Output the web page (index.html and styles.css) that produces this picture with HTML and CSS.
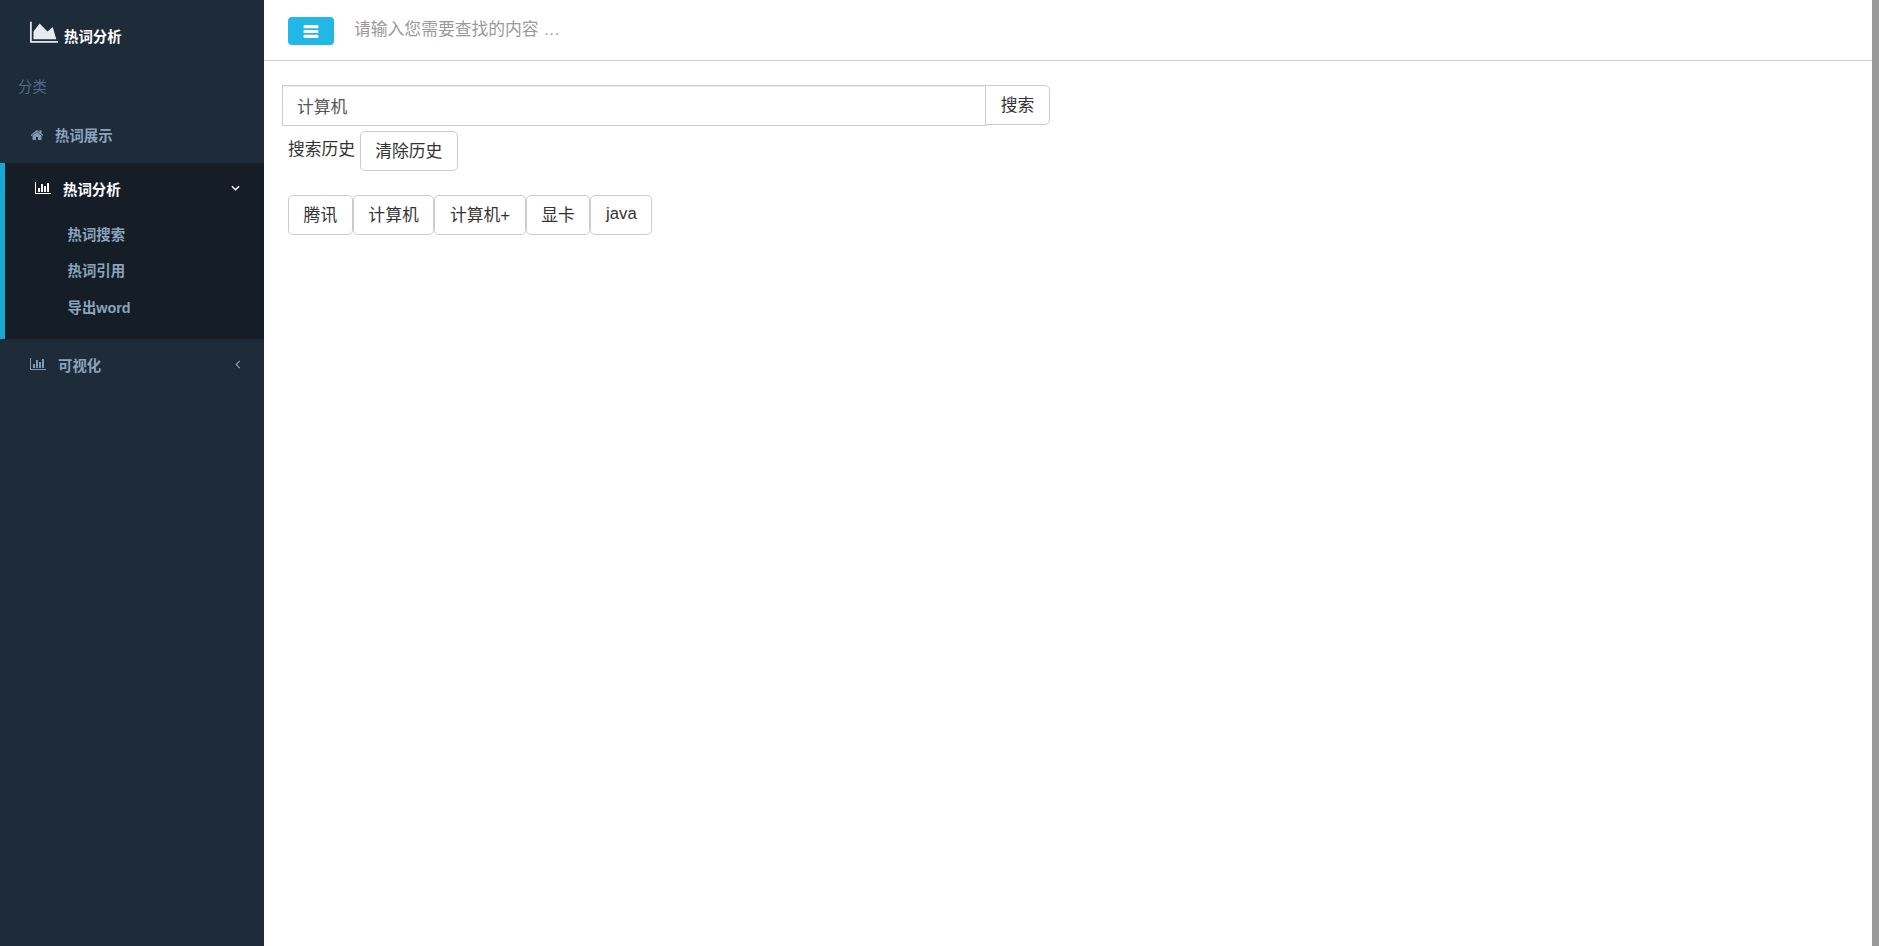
FILE: index.html
```html
<!DOCTYPE html>
<html lang="zh">
<head>
<meta charset="utf-8">
<title>热词分析</title>
<link rel="stylesheet" href="styles.css">
</head>
<body>
<div class="app">
  <aside class="sidebar">
    <div class="logo">
      <svg class="logo-icon" viewBox="0 0 2048 1792"><path d="M2048 1536v128H0V128h128v1408zM1664 512l256 896H256V832l448-576 576 576z"/></svg>
      <span>热词分析</span>
    </div>
    <div class="nav-label">分类</div>
    <a class="nav-item nav-item-home">
      <svg class="icon-home" viewBox="0 0 1792 1792"><path d="M1472 992v480q0 26-19 45t-45 19h-384v-384H768v384H384q-26 0-45-19t-19-45V992q0-1 .5-3t.5-3l575-474 575 474q1 2 1 6zm223-69l-62 74q-8 9-21 11h-3q-13 0-21-7L896 444 204 1021q-12 8-24 7-13-2-21-11l-62-74q-8-10-7-23.5T101 898l719-599q32-26 76-26t76 26l244 204V308q0-14 9-23t23-9h192q14 0 23 9t9 23v408l219 182q10 8 11 21.5t-7 23.5z"/></svg>
      <span>热词展示</span>
    </a>
    <div class="nav-group">
      <a class="nav-item nav-item-active">
        <svg class="icon-bars" viewBox="0 0 2048 1792"><path d="M640 896v512H384V896h256zm384-512v1024H768V384h256zm1024 1152v128H0V128h128v1408h1920zm-640-896v768h-256V640h256zm384-384v1152h-256V256h256z"/></svg>
        <span class="grow">热词分析</span>
        <svg class="chev-down" viewBox="0 0 10 6"><path d="M1 1l4 4 4-4"/></svg>
      </a>
      <a class="sub-item">热词搜索</a>
      <a class="sub-item">热词引用</a>
      <a class="sub-item">导出word</a>
    </div>
    <a class="nav-item nav-item-last">
      <svg class="icon-bars-lg" viewBox="0 0 2048 1792"><path d="M640 896v512H384V896h256zm384-512v1024H768V384h256zm1024 1152v128H0V128h128v1408h1920zm-640-896v768h-256V640h256zm384-384v1152h-256V256h256z"/></svg>
      <span class="grow">可视化</span>
      <svg class="chev-left" viewBox="0 0 6 10"><path d="M5 1L1 5l4 4"/></svg>
    </a>
  </aside>
  <main class="main">
    <header class="topbar">
      <button class="menu-btn" type="button" aria-label="menu">
        <svg viewBox="0 0 16 14"><path d="M1 0h14a1 1 0 0 1 1 1v1.4a1 1 0 0 1-1 1H1a1 1 0 0 1-1-1V1a1 1 0 0 1 1-1zM1 5.300h14a1 1 0 0 1 1 1v1.400a1 1 0 0 1-1 1H1a1 1 0 0 1-1-1v-1.400a1 1 0 0 1 1-1zM1 10.600h14a1 1 0 0 1 1 1V13a1 1 0 0 1-1 1H1a1 1 0 0 1-1-1v-1.400a1 1 0 0 1 1-1z"/></svg>
      </button>
      <input class="top-search" type="text" placeholder="请输入您需要查找的内容 …">
    </header>
    <section class="content">
      <div class="search-row">
        <input class="search-input" type="text" value="计算机">
        <button class="btn btn-search" type="button">搜索</button>
      </div>
      <div class="history-head">
        <span>搜索历史</span> <button class="btn" type="button">清除历史</button>
      </div>
      <div class="history-list">
        <button class="btn" type="button">腾讯</button>
        <button class="btn" type="button">计算机</button>
        <button class="btn" type="button">计算机+</button>
        <button class="btn" type="button">显卡</button>
        <button class="btn" type="button">java</button>
      </div>
    </section>
  </main>
  <div class="scrollbar"></div>
</div>
</body>
</html>
```
FILE: styles.css
```css
* { box-sizing: border-box; }
html, body { margin: 0; height: 100%; overflow: hidden; }
body {
  font-family: "Liberation Sans", "Noto Sans CJK SC", sans-serif;
  font-size: 16.8px;
  color: #333;
  background: #fff;
}
.app { display: flex; height: 946px; }

.sidebar {
  width: 264px;
  flex: none;
  background: #1e2b38;
  color: #8aa4bd;
  font-size: 14.4px;
  font-weight: 700;
}
.logo {
  display: flex;
  align-items: center;
  height: 66px;
  padding: 0 0 0 30px;
  color: #fff;
}
.logo-icon { width: 28px; height: 24.500px; fill: #e4e9f2; margin: -2px 6px 0 0; }
.logo span { margin-top: 4px; }
.nav-label {
  height: 47px;
  padding: 9px 0 0 18px;
  font-weight: 400;
  color: #4f6d8a;
  line-height: 24px;
}
.nav-item {
  display: flex;
  align-items: center;
  height: 50px;
  padding: 0 22px 0 30px;
}
.nav-item svg { flex: none; }
.grow { flex: 1; }
.nav-item-home { padding-bottom: 7px; }
.icon-home { width: 14px; height: 14px; fill: #7f9ab3; margin-right: 11px; }
.nav-group {
  height: 176px;
  background: #151e27;
  border-left: 5px solid #17a8d6;
}
.nav-item-active { height: 54px; padding: 0 24px 4px 30px; color: #fff; }
.icon-bars { width: 16px; height: 14px; fill: #fff; margin-right: 12px; }
.chev-down { width: 9px; height: 6px; fill: none; stroke: #fff; stroke-width: 1.600; }
.sub-item {
  display: block;
  height: 36.300px;
  line-height: 36.300px;
  padding-left: 62.500px;
}
.nav-item-last { height: 52px; padding-right: 23px; padding-bottom: 2px; }
.icon-bars-lg { width: 16px; height: 14px; fill: #7f9ab3; margin-right: 12px; }
.chev-left { width: 6px; height: 9px; fill: none; stroke: #7f9ab3; stroke-width: 1.400; }

.main { flex: 1; min-width: 0; }
.topbar {
  display: flex;
  align-items: center;
  height: 61px;
  padding: 0 0 0 24px;
  border-bottom: 1px solid #cfcfcf;
}
.menu-btn {
  display: flex;
  align-items: center;
  justify-content: center;
  width: 46px;
  height: 28px;
  margin: 2px 20px 0 0;
  padding: 0;
  border: 0;
  border-radius: 4px;
  background: #23b7e5;
}
.menu-btn svg { width: 16px; height: 13px; fill: #fff; }
.top-search {
  flex: 1;
  height: 40px;
  padding: 0;
  border: 0;
  outline: 0;
  font: inherit;
  color: #333;
  background: transparent;
  margin-top: -1px;
}
.top-search::placeholder { color: #999; opacity: 1; }

.content { padding: 24px 0 0 18px; }
.search-row { display: flex; align-items: flex-start; }
.search-input {
  width: 704px;
  height: 41px;
  padding: 0 14px;
  border: 1px solid #ccc;
  outline: 0;
  font: inherit;
  color: #555;
  box-shadow: inset 0 1px 1px rgba(0, 0, 0, .075);
}
.btn {
  height: 40px;
  padding: 0 14.400px 2px;
  border: 1px solid #ccc;
  border-radius: 4.800px;
  background: #fff;
  font: inherit;
  color: #333;
}
.btn-search { margin-left: -1px; border-radius: 0 4.800px 4.800px 0; width: 65px; }
.history-head { padding: 5px 0 0 6px; height: 45px; }
.history-head span { vertical-align: 2px; }
.history-list { display: flex; padding: 24px 0 0 6px; }
.history-list .btn { padding-left: 14.600px; padding-right: 14.600px; }
.scrollbar { width: 7px; flex: none; background: #999; }
```
